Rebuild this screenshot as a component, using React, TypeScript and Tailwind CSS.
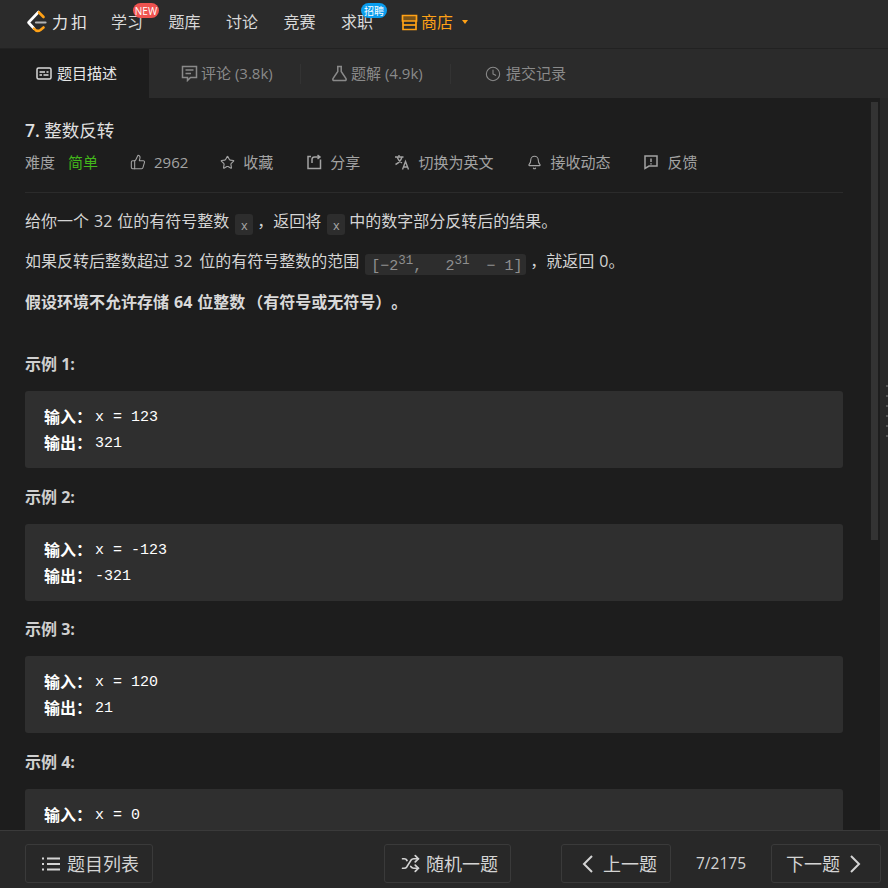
import React from "react";
import { ThumbsUp, Star, Bell, Clock, Shuffle } from "lucide-react";

const sans = "font-['Open_Sans','Noto_Sans_CJK_SC',sans-serif]";
const mono = "font-['Liberation_Mono','Noto_Sans_CJK_SC',monospace]";

function Logo() {
  return (
    <svg width="22" height="24" viewBox="0 0 22 24" fill="none" className="shrink-0">
      <path d="M12.5 2 L2.5 12.5 L8 18.5" stroke="#ffffff" strokeWidth="2.6" strokeLinecap="round" strokeLinejoin="round" />
      <path d="M8 18.5 Q11 22.5 14.5 20 L17.5 17.5" stroke="#ffa116" strokeWidth="2.6" strokeLinecap="round" />
      <path d="M13 2.5 L17.5 7" stroke="#ffa116" strokeWidth="2.6" strokeLinecap="round" />
      <path d="M10 12.5 H19.5" stroke="#b3b3b3" strokeWidth="2.2" strokeLinecap="round" />
    </svg>
  );
}

function NavItem({ label, badge }: { label: string; badge?: React.ReactNode }) {
  return (
    <div className="relative text-[16px] leading-[22px] text-[#d9d9d9]">
      {label}
      {badge}
    </div>
  );
}

function Divider() {
  return <div className="h-[20px] w-px shrink-0 bg-[#333333]" />;
}

function Meta({ icon, label, className }: { icon: React.ReactNode; label: string; className: string }) {
  return (
    <div className={`flex items-center gap-[8px] text-[15px] leading-[20px] text-[#a3a3a3] ${className}`}>
      {icon}
      <span>{label}</span>
    </div>
  );
}

function InlineCode({ children, className }: { children: React.ReactNode; className: string }) {
  return (
    <code className={`inline-block h-[21px] w-[18px] rounded-[3px] bg-[#2d2d2d] text-center align-[-3px] ${mono} text-[12px] leading-[26px] text-[#a6a6a6] ${className}`}>
      {children}
    </code>
  );
}

function Example({ n, input, output }: { n: number; input: string; output: string }) {
  return (
    <div>
      <div className="h-[20px] -translate-y-px text-[16px] leading-[20px] font-bold text-[#cfcfcf]">示例 {n}:</div>
      <div className="mt-[16px] h-[77px] rounded-[3px] bg-[#2f2f2f] px-[19px] pt-[13px] text-[16px] text-white">
        <div className="flex h-[26px] items-center">
          <span className="w-[51px] font-bold">{"输入\uFF1A"}</span>
          <span className={`${mono} translate-y-px text-[15px] leading-[26px]`}>{input}</span>
        </div>
        <div className="flex h-[26px] items-center">
          <span className="w-[51px] font-bold">{"输出\uFF1A"}</span>
          <span className={`${mono} translate-y-px text-[15px] leading-[26px]`}>{output}</span>
        </div>
      </div>
    </div>
  );
}

function FootBtn({ children, className }: { children: React.ReactNode; className: string }) {
  return (
    <div className={`flex h-[39px] shrink-0 items-center rounded-[3px] border border-[#3a3a3a] text-[18px] leading-[24px] text-[#d4d4d4] ${className}`}>
      {children}
    </div>
  );
}

export default function App() {
  return (
    <div className={`flex h-[888px] w-[888px] flex-col overflow-hidden bg-[#282828] ${sans}`}>
      <header className="flex h-[49px] shrink-0 items-center border-b border-[#222222] bg-[#2b2b2b] pb-[4px] pl-[26px]">
        <Logo />
        <div className="ml-[4px] w-[59px] text-[16px] leading-[24px] tracking-[3px] text-[#e6e6e6]">力扣</div>
        <div className="flex items-center gap-[25.5px]">
          <NavItem
            label="学习"
            badge={
              <span className="absolute -top-[8px] left-[22px] flex h-[15px] w-[26px] items-center justify-center rounded-full bg-[#ef5350] text-[10px] leading-none text-white">
                NEW
              </span>
            }
          />
          <NavItem label="题库" />
          <NavItem label="讨论" />
          <NavItem label="竞赛" />
          <NavItem
            label="求职"
            badge={
              <span className="absolute -top-[8px] left-[20px] flex h-[15px] w-[26px] items-center justify-center rounded-full bg-[#0a9dee] text-[10px] leading-none text-white">
                招聘
              </span>
            }
          />
        </div>
        <div className="ml-[28px] flex items-center gap-[3px] text-[16px] leading-[22px] text-[#ffa116]">
          <svg width="17" height="17" viewBox="0 0 17 17" fill="none" stroke="#ffa116" strokeWidth="1.7">
            <path d="M1.5 1.5H15.5V7H1.5Z" fill="#7a5318" />
            <path d="M2 7V15.5H15V7" />
            <path d="M2 11H15" />
          </svg>
          <span>商店</span>
          <span className="ml-[6px] h-0 w-0 border-x-[3.5px] border-t-[4px] border-x-transparent border-t-[#ffa116]" />
        </div>
      </header>

      <nav className="flex h-[49px] shrink-0 items-center bg-[#2b2b2b] text-[15px]">
        <div className="flex h-full w-[149px] items-center gap-[5px] bg-[#1d1d1d] pl-[36px] text-[#e6e6e6]">
          <svg width="16" height="13" viewBox="0 0 16 13" fill="none" stroke="#d9d9d9" strokeWidth="1.5">
            <rect x="1" y="1" width="14" height="11" rx="1.5" />
            <path d="M3.5 5H9M10.5 5H12.5M3.5 8H6M7.5 8H12.5" />
          </svg>
          题目描述
        </div>
        <div className="flex w-[151px] items-center gap-[3px] pl-[32px] text-[#8a8a8a]">
          <svg width="17" height="17" viewBox="0 0 17 17" fill="none" stroke="currentColor" strokeWidth="1.5">
            <path d="M1.5 1.5H15.5V12.5H9.5L6.5 15.5V12.5H1.5Z" />
            <path d="M4.5 5H12.5M4.5 8.5H10" />
          </svg>
          评论 (3.8k)
        </div>
        <Divider />
        <div className="flex w-[149px] items-center gap-[3px] pl-[30px] text-[#8a8a8a]">
          <svg width="17" height="17" viewBox="0 0 17 17" fill="none" stroke="currentColor" strokeWidth="1.5">
            <path d="M6 1.5H11M6.8 1.5V6.5L2 13.5Q1.3 15.5 3.2 15.5H13.8Q15.7 15.5 15 13.5L10.2 6.5V1.5" />
          </svg>
          题解 (4.9k)
        </div>
        <Divider />
        <div className="flex w-[150px] items-center gap-[5px] pl-[34px] text-[#8a8a8a]">
          <Clock size={16} strokeWidth={1.6} />
          提交记录
        </div>
      </nav>

      <main className="flex min-h-0 flex-1 bg-[#1d1d1d]">
        <div className="w-[871px] shrink-0 overflow-hidden pl-[25px] pr-[28px] pt-[21px]">
          <h1 className="h-[22px] text-[17.5px] leading-[22px] font-normal text-[#e0e0e0]">
            <span className="font-semibold">7.</span> 整数反转
          </h1>
          <div className="mt-[11px] flex h-[20px] items-center text-[15px] text-[#a3a3a3]">
            <span>难度</span>
            <span className="ml-[13px] text-[#43b81b]">简单</span>
            <Meta className="ml-[32px]" icon={<ThumbsUp size={16} strokeWidth={1.6} />} label="2962" />
            <Meta className="ml-[32px]" icon={<Star size={15} strokeWidth={1.8} />} label="收藏" />
            <Meta
              className="ml-[33px]"
              icon={
                <svg width="16" height="16" viewBox="0 0 16 16" fill="none" stroke="currentColor" strokeWidth="1.5">
                  <path d="M5 2.5H2V14.5H14.5V5.5M6 9V5.5Q6 3 8.5 3H14M11.5 1L14 3L11.5 5" />
                </svg>
              }
              label="分享"
            />
            <Meta
              className="ml-[34px]"
              icon={
                <svg width="16" height="16" viewBox="0 0 16 16" fill="none" stroke="currentColor" strokeWidth="1.4">
                  <path d="M1 3H9.5M5 1V3M8 3Q6.5 8 1.5 10.5M3 3Q4.5 7 8 9" />
                  <path d="M8.5 15.5L11.5 7.5L14.5 15.5M9.5 13H13.5" />
                </svg>
              }
              label="切换为英文"
            />
            <Meta className="ml-[34px]" icon={<Bell size={15} strokeWidth={1.8} />} label="接收动态" />
            <Meta
              className="ml-[33px]"
              icon={
                <svg width="16" height="16" viewBox="0 0 16 16" fill="none" stroke="currentColor" strokeWidth="1.5">
                  <path d="M2 2H14V12H6L2 14.5Z" />
                  <path d="M8 4.5V8M8 9.2V10.5" />
                </svg>
              }
              label="反馈"
            />
          </div>
          <div className="mt-[20px] h-px bg-[#2b2b2b]" />

          <div className="mt-[18px] text-[16px] text-[#d4d4d4]">
            <p className="h-[21px] leading-[21px] whitespace-nowrap">
              给你一个<span className="mx-[5px]">32</span>位的有符号整数
              <InlineCode className="ml-[6px] mr-[4px]">x</InlineCode>
              {"\uFF0C返回将"}
              <InlineCode className="ml-[6px] mr-[4px]">x</InlineCode>
              中的数字部分反转后的结果。
            </p>
            <p className="mt-[19px] h-[21px] leading-[21px] whitespace-nowrap">
              如果反转后整数超过<span className="ml-[5px] mr-[7px]">32</span>位的有符号整数的范围
              <code className={`ml-[6px] mr-[4px] inline-block h-[21px] w-[161px] rounded-[3px] bg-[#2d2d2d] pl-[6px] align-[-3px] ${mono} text-[15px] leading-[25px] text-[#8f8f8f]`}>
                [−2<sup className="text-[12.5px] leading-none">31</sup>,<span className="ml-[23px]">2</span><sup className="text-[12.5px] leading-none">31</sup><span className="ml-[17px]">−</span><span className="ml-[9px]">1]</span>
              </code>
              {"\uFF0C就返回"}<span className="ml-[5px]">0</span>。
            </p>
            <p className="mt-[20px] h-[21px] leading-[21px] font-bold whitespace-nowrap text-[#d9d9d9]">
              假设环境不允许存储<span className="mx-[5px]">64</span>位整数<span className="ml-[2px]">{"\uFF08有符号或无符号\uFF09"}</span><span className="ml-[8px]">。</span>
            </p>
          </div>

          <div className="mt-[42px] flex flex-col gap-[19.5px]">
            <Example n={1} input="x = 123" output="321" />
            <Example n={2} input="x = -123" output="-321" />
            <Example n={3} input="x = 120" output="21" />
            <Example n={4} input="x = 0" output="0" />
          </div>
        </div>
        <div className="w-[9px] shrink-0 pt-[4px]">
          <div className="h-[438px] w-[7px] bg-[#333333]" />
        </div>
        <div className="flex w-[8px] shrink-0 flex-col items-end gap-[8px] bg-[#282828] pt-[287px]">
          <div className="h-[2px] w-[2px] bg-[#555555]" />
          <div className="h-[2px] w-[2px] bg-[#555555]" />
          <div className="h-[2px] w-[2px] bg-[#555555]" />
          <div className="h-[2px] w-[2px] bg-[#555555]" />
          <div className="h-[2px] w-[2px] bg-[#555555]" />
          <div className="h-[2px] w-[2px] bg-[#555555]" />
        </div>
      </main>

      <footer className="flex h-[58px] shrink-0 items-start border-t border-[#3a3a3a] bg-[#282828] pt-[13px] pl-[25px]">
        <FootBtn className="w-[128px] gap-[6px] pl-[15px]">
          <svg width="20" height="16" viewBox="0 0 20 16" fill="none" stroke="currentColor" strokeWidth="2">
            <path d="M1 2.5H3M6 2.5H19M1 8H3M6 8H19M1 13.5H3M6 13.5H19" />
          </svg>
          题目列表
        </FootBtn>
        <FootBtn className="ml-[231px] w-[127px] gap-[6px] pl-[16px]">
          <Shuffle size={19} strokeWidth={2.2} />
          随机一题
        </FootBtn>
        <FootBtn className="ml-[50px] w-[110px] gap-[9px] pl-[19px]">
          <svg width="13" height="18" viewBox="0 0 13 18" fill="none" stroke="currentColor" strokeWidth="2">
            <path d="M11 1L3 9L11 17" />
          </svg>
          上一题
        </FootBtn>
        <div className="flex h-[39px] w-[100px] shrink-0 items-center justify-center text-[15.5px] text-[#d4d4d4]">7/2175</div>
        <FootBtn className="w-[110px] gap-[9px] pl-[14px]">
          下一题
          <svg width="13" height="18" viewBox="0 0 13 18" fill="none" stroke="currentColor" strokeWidth="2">
            <path d="M2 1L10 9L2 17" />
          </svg>
        </FootBtn>
      </footer>
    </div>
  );
}
